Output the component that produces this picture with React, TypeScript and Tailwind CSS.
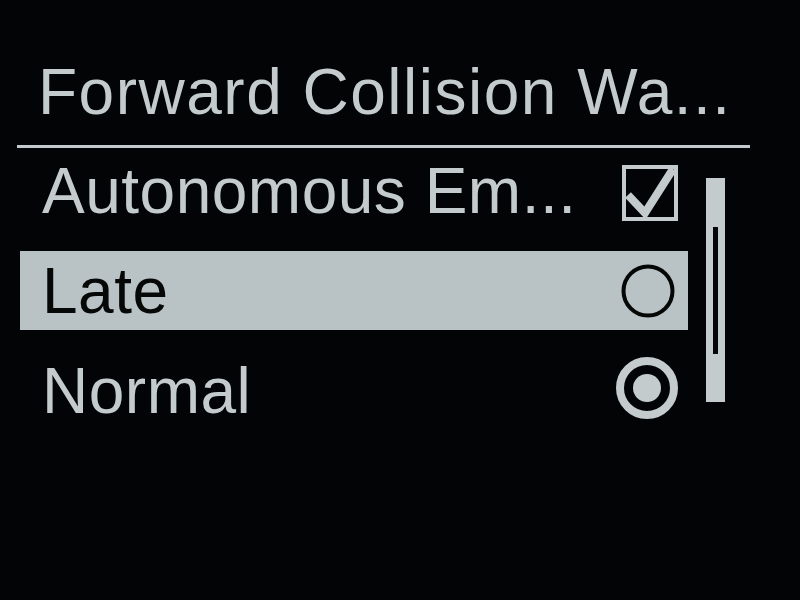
import React from "react";

const FG = "text-[#c3cbcd]";

function CheckBox() {
  return (
    <svg width="56" height="56" viewBox="0 0 56 56" className="mt-[4px]">
      <rect x="2" y="2" width="52" height="52" fill="none" stroke="#c3cbcd" strokeWidth="4" />
      <polyline
        points="6,30 23,48 51,4"
        fill="none"
        stroke="#c3cbcd"
        strokeWidth="8"
        strokeLinejoin="miter"
      />
    </svg>
  );
}

function RadioEmpty() {
  return (
    <svg width="54" height="54" viewBox="0 0 54 54" className="mr-[3px]">
      <circle cx="27" cy="27" r="24.5" fill="none" stroke="#050606" strokeWidth="4" />
    </svg>
  );
}

function RadioOn() {
  return (
    <svg width="62" height="62" viewBox="0 0 62 62" className="-mt-[5px]">
      <circle cx="31" cy="31" r="27" fill="none" stroke="#c3cbcd" strokeWidth="8" />
      <circle cx="31" cy="31" r="14" fill="#c3cbcd" />
    </svg>
  );
}

type Row = { label: string; control: React.ReactNode; active?: boolean };

const ROWS: Row[] = [
  { label: "Autonomous Em...", control: <CheckBox /> },
  { label: "Late", control: <RadioEmpty />, active: true },
  { label: "Normal", control: <RadioOn /> },
];

export default function App() {
  return (
    <div
      className="h-[600px] w-[800px] overflow-hidden bg-[#030405]"
      style={{ fontFamily: '"Liberation Sans", Arial, sans-serif' }}
    >
      {/* Title */}
      <div className={`pl-[38px] pt-[60px] text-[64px] leading-[64px] tracking-[1.5px] ${FG}`}>
        Forward Collision Wa...
      </div>

      {/* Divider */}
      <div className="ml-[17px] mt-[21px] h-[3px] w-[733px] bg-[#c3cbcd]" />

      <div className="flex">
        {/* List */}
        <div className="ml-[20px] mt-[3px] flex w-[668px] flex-col gap-[21px]">
          {ROWS.map((row) => (
            <div
              key={row.label}
              className={`flex h-[79px] items-center justify-between pl-[22px] pr-[10px] ${
                row.active ? "bg-[#b9c3c5] text-[#060707]" : FG
              }`}
            >
              <span className="text-[64px] leading-[64px] tracking-[0.5px]">{row.label}</span>
              {row.control}
            </div>
          ))}
        </div>

        {/* Scrollbar */}
        <div className="ml-[18px] mt-[30px] flex h-[224px] w-[19px] flex-col items-center bg-[#c3cbcd] pt-[49px]">
          <div className="h-[127px] w-[5px] bg-[#050606]" />
        </div>
      </div>
    </div>
  );
}
